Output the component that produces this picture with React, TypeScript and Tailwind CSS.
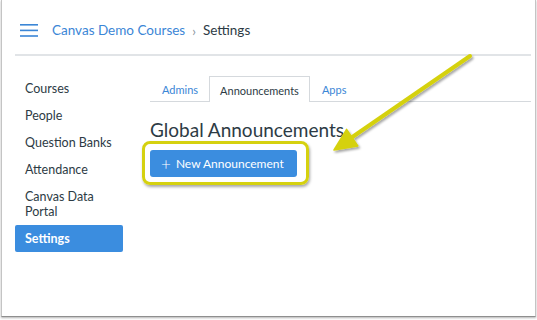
const NAV = ['Courses', 'People', 'Question Banks', 'Attendance', 'Canvas Data Portal']

function Hamburger() {
  return (
    <svg width="18" height="13" viewBox="0 0 18 13" className="shrink-0">
      <rect x="0" y="0" width="18" height="1.6" fill="#3b86d6" />
      <rect x="0" y="5.6" width="18" height="1.6" fill="#3b86d6" />
      <rect x="0" y="11.2" width="18" height="1.6" fill="#3b86d6" />
    </svg>
  )
}

function Arrow() {
  // annotation arrow laid over the page
  return (
    <svg width="537" height="320" className="pointer-events-none absolute left-0 top-0">
      <defs>
        <filter id="sh" x="-20%" y="-20%" width="140%" height="140%">
          <feDropShadow dx="1.5" dy="2" stdDeviation="1.2" floodColor="#000" floodOpacity="0.35" />
        </filter>
      </defs>
      <g filter="url(#sh)">
        <line x1="468" y1="56" x2="346" y2="140" stroke="#d5d10f" strokeWidth="4" strokeLinecap="round" />
        <polygon points="332,150 344.6,129.4 355.8,145.9" fill="#d5d10f" stroke="#d5d10f" strokeWidth="1.5" strokeLinejoin="round" />
      </g>
    </svg>
  )
}

export default function App() {
  return (
    <div className="h-[320px] w-[537px] bg-white font-['Lato','Liberation_Sans',sans-serif]">
      <div className="relative ml-px h-[317px] w-[535px] border-x border-b border-x-[#c4c4c4] border-b-[#8f8f8f] bg-white shadow-[0_1px_2px_rgba(0,0,0,0.3)]">
        {/* Header */}
        <div className="ml-[13px] mr-[4px] flex h-[56px] items-center border-b-2 border-[#e1e4e7] pl-[5px] pt-[6px]">
          <Hamburger />
          <div className="ml-[14px] flex items-center pt-[2px] text-[13.5px] leading-none">
            <span className="text-[#3b86d6]">Canvas Demo Courses</span>
            <span className="mx-[7px] text-[13px] text-[#8a949c]">›</span>
            <span className="text-[#2d3b45]">Settings</span>
          </div>
        </div>

        {/* Body */}
        <div className="flex pl-[13px] pt-[19px]">
          <nav className="w-[108px] text-[12.5px] leading-[15px] text-[#2d3b45]">
            {NAV.map((n) => (
              <div key={n} className="py-[6px] pl-[10px]">
                {n}
              </div>
            ))}
            <div className="rounded-[2px] bg-[#3b8ddf] py-[6px] pl-[10px] font-bold text-white">Settings</div>
          </nav>

          <div className="ml-[27px] mr-[4px] flex-1 pt-[1px]">
            <div className="flex h-[26px] border-b border-[#d5d9dd] pl-px text-[11px] leading-none">
              <div className="flex items-center px-[11px] pt-[1px] text-[#3b86d6]">Admins</div>
              <div className="-mb-px flex items-center border-x border-t border-[#d5d9dd] bg-white px-[10px] pt-[1px] text-[#2d3b45]">
                Announcements
              </div>
              <div className="flex items-center px-[12px] pt-[1px] text-[#3b86d6]">Apps</div>
            </div>

            <h1 className="mt-[16px] text-[19px] leading-[24px] text-[#2d3b45]">Global Announcements</h1>

            <div className="relative mt-[8px] w-[147px]">
              <button className="flex h-[27px] w-[147px] items-center rounded-[3px] bg-[#3b8ddf] pl-[11px] text-[12px] text-white">
                <span className="mr-[5px] text-[17px] font-light leading-none">+</span>
                New Announcement
              </button>
              <div className="pointer-events-none absolute -left-[8px] -top-[9px] h-[44px] w-[167px] rounded-[8px] border-[3px] border-[#d5d10f] shadow-[1px_2px_3px_rgba(0,0,0,0.35)]" />
            </div>
          </div>
        </div>

        <Arrow />
      </div>
    </div>
  )
}
